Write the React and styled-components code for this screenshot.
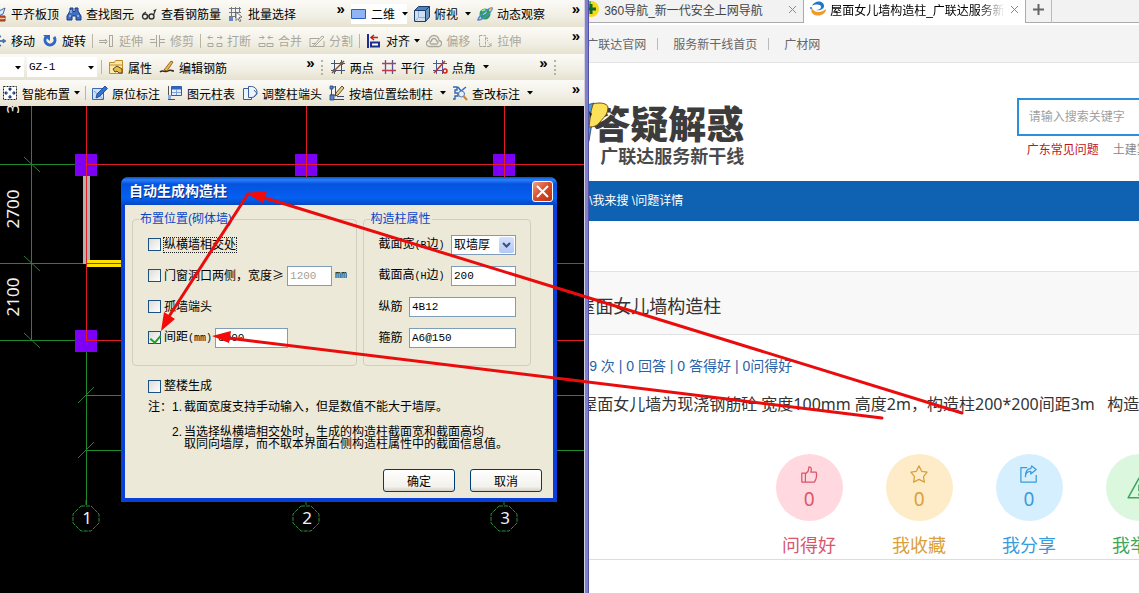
import React from 'react'
import styled, { createGlobalStyle, css } from 'styled-components'

const GlobalStyle = createGlobalStyle`
  * {
    box-sizing: border-box;
  }
  body {
    margin: 0;
    background: #fff;
    font-family: "Liberation Sans", "Noto Sans CJK SC", sans-serif;
    font-size: 12px;
  }
  button, input, select {
    font-family: inherit;
    font-size: inherit;
  }
`

const grey = '#aaa89c'

const icons = {
  slab: <><path d="M6 6l8-4-2 6-7 3z" fill="#dde8f7" stroke="#3c68b0" /><path d="M3 10h11v5H3z" fill="#d2562a" stroke="#8f3210" /><path d="M3 12.500h11M8 10v5" stroke="#f3c8a8" /></>,
  find: <><path d="M4 2h3v3l1 1 1-1V2h3v3l3 5v4h-5v-4H6v4H1v-4l3-5z" fill="#3f6fc0" stroke="#1c3c86" /><path d="M3 10h2M11 10h2M5 4v3" stroke="#cfe0ff" /></>,
  glasses: <><circle cx="4" cy="10.500" r="2.500" fill="none" stroke="#333" strokeWidth="1.400" /><circle cx="10.500" cy="10.500" r="2.500" fill="none" stroke="#333" strokeWidth="1.400" /><path d="M6.500 10h2M12.500 9l2-5-2 1M2 8l3-2" fill="none" stroke="#333" strokeWidth="1.200" /></>,
  batch: <><path d="M1 2.500h12M1 6.500h12M1 10.500h7M3.500 1v12M7.500 1v11M11.500 1v6" stroke="#6f7684" /><path d="M1 11h4v4H1z" fill="#5f86cf" /><path d="M8 6l6 5-3 .5 2 3.500-1.500.5-1.500-3-2 2z" fill="#fff" stroke="#555" strokeWidth=".8" /></>,
  plane: <path d="M.5 3.500h14v9H.5z" fill="#8fb4f5" stroke="#2f5dc0" />,
  cube: <><path d="M.5 4.500l4-4h11l-4 4z" fill="#4a82c4" stroke="#1d3d66" /><path d="M.5 4.500h11v11H.5z" fill="#cfe0f2" stroke="#1d3d66" /><path d="M11.500 4.500l4-4V11l-4 4.500z" fill="#6a94c4" stroke="#1d3d66" /><path d="M4.500 5v6.500H11M4.500 11.500l-4 4" fill="none" stroke="#8fb0d4" /></>,
  orbit: <><circle cx="8" cy="8" r="5.500" fill="#2ba04a" /><path d="M5 5c2-2 4-1 4 1s-3 1-3 3" fill="none" stroke="#a8e8a0" strokeWidth="1.500" /><path d="M1 14c0-3 10-12 14-12 1 3-9 12-14 12z" fill="none" stroke="#4f86d8" strokeWidth="1.500" /><path d="M12 2h3v3" fill="#e8a020" /></>,
  move: <path d="M8 1l2 3H8.500v3.500H12V6l3 2-3 2V8.500H8.500V12H10l-2 3-2-3h1.500V8.500H4V10L1 8l3-2v1.500h3.500V4H6z" fill="#4b79b6" stroke="#2c5690" strokeWidth=".6" />,
  rotate: <><path d="M4 4a5 5 0 1 0 8 0" fill="none" stroke="#2f66c8" strokeWidth="3" /><path d="M1 2h7v6z" fill="#2f66c8" /></>,
  extend: <path d="M0 7.500h8M0 9.500h8M10.500 2v12M13.500 2v12M10 2.500h4M10 13.500h4M6 6l2 2.500L6 11" fill="none" stroke={grey} />,
  trim: <path d="M0 6.500h5M0 9.500h6M10 6.500h5M10 9.500h5M6.500 2v12M9.500 2v12" fill="none" stroke={grey} />,
  snap: <path d="M1 4.500h5M10 4.500h5M3 2.500L1 4.500l2 2M13 2.500l2 2-2 2M1 10.500h5v3H1zM10 10.500h5v3h-5z" fill="none" stroke={grey} />,
  merge: <path d="M1 4.500h5M10 4.500h5M4 2.500l2 2-2 2M12 2.500l-2 2 2 2M1 10.500h6v3H1zM9 10.500h6v3H9z" fill="none" stroke={grey} />,
  split: <path d="M1 5.500h9M1 13.500h14M1 5v9M15 8v6M4 13l9-10 2 1-9 9M3 10.500h4" fill="none" stroke={grey} />,
  align: <><path d="M2 1v14" stroke="#1c2f8c" strokeWidth="2" /><path d="M5 9.500h8v4H5z" fill="#fff" stroke="#1c2f8c" strokeWidth="2" /><path d="M5 4.500h7M8 2L5 4.500 8 7" fill="none" stroke="#c22020" strokeWidth="1.500" /></>,
  offset: <path d="M4 13.500a3 3 0 0 1-1-6 5 5 0 0 1 10 0 3 3 0 0 1-1 6zM5.500 11a1.500 1.500 0 0 1 0-3 2.500 2.500 0 0 1 5 0 1.500 1.500 0 0 1 0 3z" fill="none" stroke={grey} strokeWidth="1.300" />,
  stretch: <path d="M2.500 2.500h6v11h-6zM8.500 5h2v3M6 13.500h8l-3-4M14 10v4" fill="none" stroke={grey} strokeDasharray="3 1" />,
  props: <><path d="M1.500 3.500h5l1-2h7v13h-13z" fill="#ffe9a8" stroke="#c58a28" /><path d="M2 6h12" stroke="#c58a28" /><path d="M5 10l4-3 5 3v4h-3l-2-2-2 1z" fill="#e8c040" stroke="#54422a" /></>,
  editBar: <><path d="M1 13c3-3 5 1 8-1s3 0 6 0" fill="none" stroke="#3a2a18" strokeWidth="1.500" /><path d="M5 11L12 2l2 1-6 9z" fill="#f0b848" stroke="#7c4c18" strokeWidth=".8" /></>,
  twoPoint: <><path d="M4.500 1v14M11.500 1v14M1 4.500h14M1 11.500h14" stroke="#43536f" /><path d="M2 14L14 2" stroke="#8f4a3a" strokeWidth="1.500" /><path d="M3 10h3v3H3zM10 3h3v3h-3z" fill="#6e5a50" /></>,
  parallel: <><path d="M4.500 1v14M11.500 1v14" stroke="#4a5a9c" strokeWidth="1.300" /><path d="M1 4.500h14M1 11.500h14" stroke="#c03a4c" strokeWidth="1.300" /></>,
  corner: <><path d="M4.500 1v14M10.500 1v14M1 4.500h14M1 11.500h10" stroke="#4a5a9c" /><path d="M2 14L13 2" stroke="#c03030" strokeWidth="1.500" /><circle cx="13" cy="12" r="2" fill="none" stroke="#d02020" strokeWidth="1.500" /></>,
  smart: <><path d="M1.500 1.500h13v13h-13z" fill="#fff" stroke="#222" strokeDasharray="2 1" /><path d="M8 3v3M8 10v3M3 8h3M10 8h3M6.500 4.500L8 3l1.500 1.500M6.500 11.500L8 13l1.500-1.500M4.500 6.500L3 8l1.500 1.500M11.500 6.500L13 8l-1.500 1.500" fill="none" stroke="#1c3c78" strokeWidth="1.200" /></>,
  note: <><path d="M.5 3.500h11v11H.5z" fill="#cfe0f7" stroke="#3a6ab0" /><path d="M2 6l9 8" stroke="#7aa0dc" /><path d="M4 13l1-4 8-8 2.500 2.500-8 8z" fill="#2f72d0" stroke="#153f86" strokeWidth=".8" /></>,
  table: <><path d="M1.500 1v14M1 14.500h7" stroke="#555" /><path d="M4.500 1.500h10v9h-10z" fill="#e3eeff" stroke="#2f5da8" /><path d="M5 2h9v2.500H5z" fill="#2f66c0" /><path d="M5 7.500h9M9.500 4v6" stroke="#7aa0dc" /><path d="M1 10h3v4H1z" fill="#88aee6" /></>,
  end: <path d="M6 3.500H1.500v11h8V12M6.500 3v-1.500h3a5 5 0 0 1 0 11h-3zM12 5l3 3.500-3 3" fill="#eef4ff" stroke="#3b5f98" />,
  wall: <><path d="M2.500 1v13M6.500 1v9M2 14.500h13M8 11.500h7M1 2h6M1 10h6" stroke="#3b4a78" /><path d="M1 1h3v3H1zM1 10h4v5H1z" fill="#5a86d0" stroke="#24427c" strokeWidth=".8" /><path d="M6 11l1-3 6-7 2 2-6 7z" fill="#f0d088" stroke="#4a3a20" strokeWidth=".9" /></>,
  check: <><path d="M1 2h4v3H3v3h3v3H3v3H1M6 2l3 4 5-4" fill="none" stroke="#2f68b8" strokeWidth="1.400" /><circle cx="9.500" cy="9" r="3" fill="#dff0ff" stroke="#50789c" /><path d="M11.500 11l3.500 4" stroke="#c88838" strokeWidth="2" /></>,
}

const Icon = ({ name }) => (
  <IconSvg viewBox="0 0 16 16" aria-hidden="true">{icons[name]}</IconSvg>
)

const Arrow = () => (
  <ArrowSvg viewBox="0 0 6 4" aria-hidden="true"><path d="M0 0h6L3 3.500z" /></ArrowSvg>
)

const ToolItem = ({ icon, label, menu, wide, disabled, active }) => (
  <Tool type="button" disabled={disabled} $active={active}>
    <Icon name={icon} />
    {label}
    {menu && <ArrowSlot $wide={wide}><Arrow /></ArrowSlot>}
  </Tool>
)

const actions = [
  { label: '问得好', color: '#d9566b', back: '#ffd9df', count: 0, icon: <path d="M2 9h4v10H2zM6 10l3-3 1-5c3 0 3 3 2 6h6c1 4 0 8-2 11H6" /> },
  { label: '我收藏', color: '#d9a03c', back: '#feecc8', count: 0, icon: <path d="M10 1l3 6 6 1-4 5 1 6-6-3-6 3 1-6-4-5 6-1z" /> },
  { label: '我分享', color: '#3a9bdc', back: '#d5efff', count: 0, icon: <path d="M8 3H1v16h17v-8M6 13c0-5 3-6 6-6v3l6-5-5-4-1 3C8 4 6 8 6 13z" /> },
  { label: '我举报', color: '#3fa65c', back: '#dbf8df', icon: <path d="M10 1l10 18H0zM10 7v6M10 15v2" /> },
]

const columnsX = [86, 306, 504]

const Drawing = () => (
  <DrawingSvg role="img" aria-label="轴网">
    <g stroke="#1d8a2c" shapeRendering="crispEdges">
      <path d="M31.500 0V235M0 58.500H86M0 157.500H86M0 234.500H86M86.500 234V399" fill="none" />
      <line x1="86" x2="100%" y1="289.500" y2="289.500" />
      <line x1="86" x2="100%" y1="344.500" y2="344.500" />
    </g>
    <path d="M24 51l16 15M24 150l16 15M24 227l16 15M78 297l16-16M78 352l16-16" stroke="#2f7a3a" fill="none" />
    <path d="M83 70h7v88h-7z" fill="#b4b0ae" />
    <path d="M86 154h40v7H86z" fill="#ffe000" />
    {columnsX.map((x) => <rect key={x} x={x - 11} y="48" width="22" height="22" fill="#7d00f5" />)}
    <rect x="75" y="224" width="22" height="22" fill="#7d00f5" />
    <g stroke="#e01c24" shapeRendering="crispEdges">
      {columnsX.map((x) => <line key={x} x1={x + 0.5} x2={x + 0.5} y1="0" y2="234" />)}
      {[58.5, 157.5, 234.5].map((y) => <line key={y} x1="86" x2="100%" y1={y} y2={y} />)}
    </g>
    <g fill="#f0f0f0" fontSize="17" textAnchor="middle" fontFamily="Noto Sans, sans-serif">
      <text transform="translate(19 3) rotate(-90)">3</text>
      <text transform="translate(19 103) rotate(-90)">2700</text>
      <text transform="translate(19 191) rotate(-90)">2100</text>
      {columnsX.map((x, i) => (
        <g key={x}>
          <path d={`M${x} 394V399`} stroke="#1d8a2c" />
          <path d={`M${x - 5} 400h10l8 8v9l-8 8h-10l-8-8v-9z`} fill="none" stroke="#2f8a3a" strokeDasharray="4 1" />
          <text x={x + 1} y="418">{i + 1}</text>
        </g>
      ))}
    </g>
  </DrawingSvg>
)

const App = () => {
  return (
    <>
      <GlobalStyle />
      <Screen>
        <CadPane>
          <ToolRow>
            <Bar $grow={12} $cut>
              <ToolItem icon="slab" label="平齐板顶" />
              <ToolItem icon="find" label="查找图元" />
              <ToolItem icon="glasses" label="查看钢筋量" />
              <ToolItem icon="batch" label="批量选择" />
              <More type="button" aria-label="更多">»</More>
            </Bar>
            <Bar $grow={8}>
              <ToolItem icon="plane" label="二维" menu wide active />
              <ToolItem icon="cube" label="俯视" menu wide />
              <ToolItem icon="orbit" label="动态观察" />
              <More type="button" aria-label="更多">»</More>
            </Bar>
          </ToolRow>
          <ToolRow>
            <Bar $grow={1} $cut>
              <ToolItem icon="move" label="移动" />
              <ToolItem icon="rotate" label="旋转" />
              <Separator />
              <ToolItem icon="extend" label="延伸" disabled />
              <ToolItem icon="trim" label="修剪" disabled />
              <Separator />
              <ToolItem icon="snap" label="打断" disabled />
              <ToolItem icon="merge" label="合并" disabled />
              <ToolItem icon="split" label="分割" disabled />
              <Separator />
              <ToolItem icon="align" label="对齐" menu />
              <ToolItem icon="offset" label="偏移" disabled />
              <ToolItem icon="stretch" label="拉伸" disabled />
              <More type="button" aria-label="更多">»</More>
            </Bar>
          </ToolRow>
          <ToolRow>
            <Bar $grow={11}>
              <ComboWrap $width={24}>
                <Combo aria-label="楼层" defaultValue=""><option value="" /></Combo>
                <Arrow />
              </ComboWrap>
              <ComboWrap $width={70}>
                <Combo aria-label="构件"><option>GZ-1</option></Combo>
                <Arrow />
              </ComboWrap>
              <Separator />
              <ToolItem icon="props" label="属性" />
              <ToolItem icon="editBar" label="编辑钢筋" />
              <More type="button" aria-label="更多">»</More>
            </Bar>
            <Bar $grow={8}>
              <Grip />
              <ToolItem icon="twoPoint" label="两点" />
              <ToolItem icon="parallel" label="平行" />
              <ToolItem icon="corner" label="点角" menu wide />
              <More type="button" aria-label="更多">»</More>
            </Bar>
            <Bar $grow={1}>
              <Grip />
            </Bar>
          </ToolRow>
          <ToolRow>
            <Bar $grow={1}>
              <ToolItem icon="smart" label="智能布置" menu />
              <Separator />
              <ToolItem icon="note" label="原位标注" />
              <ToolItem icon="table" label="图元柱表" />
              <ToolItem icon="end" label="调整柱端头" />
              <ToolItem icon="wall" label="按墙位置绘制柱" menu wide />
              <ToolItem icon="check" label="查改标注" menu wide />
              <More type="button" aria-label="更多">»</More>
            </Bar>
          </ToolRow>

          <Canvas>
            <Drawing />
            <Dialog role="dialog" aria-labelledby="dialog-title">
              <TitleBar>
                <DialogTitle id="dialog-title">自动生成构造柱</DialogTitle>
                <Close type="button" aria-label="关闭">
                  <svg width="13" height="13" viewBox="0 0 13 13"><path d="M1 1l11 11M12 1L1 12" stroke="#fff" strokeWidth="2" /></svg>
                </Close>
              </TitleBar>
              <DialogBody>
                <Groups>
                  <Group>
                    <Legend>布置位置(砌体墙)</Legend>
                    <Field>
                      <Check id="cross" />
                      <FocusLabel htmlFor="cross">纵横墙相交处</FocusLabel>
                    </Field>
                    <Field>
                      <Check id="opening" />
                      <label htmlFor="opening">门窗洞口两侧，宽度<Sign>≥</Sign></label>
                      <TextBox $width={45} aria-label="宽度" defaultValue="1200" disabled />
                      <Mono>mm</Mono>
                    </Field>
                    <Field>
                      <Check id="single" />
                      <label htmlFor="single">孤墙端头</label>
                    </Field>
                    <Field>
                      <Check id="spacing" defaultChecked />
                      <label htmlFor="spacing">间距<Mono>(mm)</Mono></label>
                      <TextBox $width={73} aria-label="间距" defaultValue="3000" />
                    </Field>
                  </Group>
                  <Group>
                    <Legend>构造柱属性</Legend>
                    <Field $spread>
                      <label htmlFor="width">截面宽<Mono>(B</Mono>边<Mono>)</Mono></label>
                      <SelectWrap>
                        <Select id="width"><option>取墙厚</option></Select>
                        <SelectButton aria-hidden="true">
                          <svg width="9" height="6" viewBox="0 0 9 6"><path d="M1 1l3.500 3.500L8 1" fill="none" stroke="#3c5078" strokeWidth="2" /></svg>
                        </SelectButton>
                      </SelectWrap>
                    </Field>
                    <Field $spread>
                      <label htmlFor="height">截面高<Mono>(H</Mono>边<Mono>)</Mono></label>
                      <TextBox $width={65} id="height" defaultValue="200" />
                    </Field>
                    <Field $spread>
                      <label htmlFor="main-bar">纵筋</label>
                      <TextBox $width={107} id="main-bar" defaultValue="4B12" />
                    </Field>
                    <Field $spread>
                      <label htmlFor="stirrup">箍筋</label>
                      <TextBox $width={107} id="stirrup" defaultValue="A6@150" />
                    </Field>
                  </Group>
                </Groups>
                <WholeField>
                  <Check id="whole" />
                  <label htmlFor="whole">整楼生成</label>
                </WholeField>
                <Notes>
                  <span>注：</span>
                  <span>1.</span>
                  <span>截面宽度支持手动输入，但是数值不能大于墙厚。</span>
                  <span />
                  <span>2.</span>
                  <span>当选择纵横墙相交处时，生成的构造柱截面宽和截面高均<br />取同向墙厚，而不取本界面右侧构造柱属性中的截面信息值。</span>
                </Notes>
                <Buttons>
                  <Button type="button">确定</Button>
                  <Button type="button">取消</Button>
                </Buttons>
              </DialogBody>
            </Dialog>
          </Canvas>
        </CadPane>

        <Divider />

        <WebPane>
          <Tabs>
            <Tab>
              <TabIcon viewBox="0 0 18 18">
                <circle cx="8" cy="9" r="8" fill="#f4d91c" />
                <path d="M8 1a8 8 0 0 0-7 12L8 9z" fill="#5cb82c" />
                <path d="M8 4v10M3 9h10" stroke="#12691e" strokeWidth="3" />
              </TabIcon>
              <TabText>360导航_新一代安全上网导航</TabText>
              <TabClose type="button" aria-label="关闭标签"><svg width="9" height="9" viewBox="0 0 9 9"><path d="M1 1l7 7M8 1L1 8" stroke="#888" /></svg></TabClose>
            </Tab>
            <Tab $active>
              <TabIcon viewBox="0 0 18 18">
                <path d="M3 6C5 0 15 0 15 6c0 3-4 5-8 4 3 0 5-1 5-3 0-3-6-3-9-1z" fill="#1d78c8" />
                <path d="M17 9c0 6-9 9-14 4-1-2-1-4 0-5 1 4 8 6 14 1z" fill="#f09a28" />
                <circle cx="2" cy="8" r="1" fill="#1d78c8" />
              </TabIcon>
              <TabText $fade>屋面女儿墙构造柱_广联达服务新</TabText>
              <TabClose type="button" aria-label="关闭标签"><svg width="9" height="9" viewBox="0 0 9 9"><path d="M1 1l7 7M8 1L1 8" stroke="#888" /></svg></TabClose>
            </Tab>
            <NewTab type="button" aria-label="新标签"><svg width="11" height="11" viewBox="0 0 11 11"><path d="M5.500 0v11M0 5.500h11" stroke="#666" strokeWidth="2" /></svg></NewTab>
          </Tabs>
          <SiteNav>
            <NavLink href="#">广联达官网</NavLink>
            <NavLink href="#">服务新干线首页</NavLink>
            <NavLink href="#">广材网</NavLink>
          </SiteNav>
          <SiteHeader>
            <Brand>
              <Bird viewBox="0 0 22 44" aria-hidden="true">
                <path d="M0 3l7-2-2 20-3 18-2 4z" fill="#3aa0e8" stroke="#245" strokeWidth=".8" />
                <path d="M6 2c6-2 14-1 15 3 0 8-5 11-8 15-3 4-6 5-11 5 1-6 1-14 4-23z" fill="#fbe05a" stroke="#6b4e18" />
                <path d="M2 9l3 3-2 4" fill="#222" />
              </Bird>
              <BrandName>答疑解惑</BrandName>
              <BrandSub>广联达服务新干线</BrandSub>
            </Brand>
            <Search>
              <SearchBox type="search" aria-label="搜索" placeholder="请输入搜索关键字" />
              <HotLinks>
                <HotLink href="#" $hot>广东常见问题</HotLink>
                <HotLink href="#">土建算量</HotLink>
              </HotLinks>
            </Search>
          </SiteHeader>
          <Crumbs>\我来搜 \问题详情</Crumbs>
          <Question>屋面女儿墙构造柱</Question>
          <Stats>9 次 | 0 回答 | 0 答得好 | 0问得好</Stats>
          <Detail>屋面女儿墙为现浇钢筋砼 宽度100mm 高度2m，构造柱200*200间距3m&nbsp;&nbsp; 构造柱</Detail>
          <Actions>
            {actions.map((a) => (
              <Action key={a.label} type="button" $color={a.color}>
                <Circle $back={a.back}>
                  <ActionIcon viewBox="-1 0 22 20" $big={a.count === undefined}>{a.icon}</ActionIcon>
                  {a.count}
                </Circle>
                {a.label}
              </Action>
            ))}
          </Actions>
        </WebPane>

        <Marks aria-hidden="true">
          <g stroke="#ea0c0c" strokeWidth="3" strokeLinecap="round">
            <path d="M962 413L262 197M248 194L168 318M882 418L228 338" />
          </g>
          <path d="M246 193l21-2-4 12zM161 331l3-19 11 7zM212 336l19-5-2 12z" fill="#f50a0a" />
        </Marks>
      </Screen>
    </>
  )
}

const Screen = styled.div`
  position: relative;
  display: grid;
  grid-template-columns: minmax(0, 17fr) 5px minmax(0, 16fr);
  min-height: 100vh;
  overflow: hidden;
`;

const CadPane = styled.div`
  display: flex;
  flex-direction: column;
  background: #ece9d8;
  overflow: hidden;
`;

const ToolRow = styled.div`
  display: flex;
  height: 27px;

  &:nth-child(n + 3) {
    height: 26px;
  }
`;

const Bar = styled.div`
  display: flex;
  flex: ${(p) => p.$grow} 1 0;
  min-width: 0;
  align-items: center;
  gap: 7px;
  padding: 0 2px;
  background: linear-gradient(#fbfaf6, #f1efe4 60%, #e6e2d0);
  overflow: hidden;

  ${(p) => p.$cut && css`
    padding-left: 0;

    > :first-child {
      margin-left: -9px;
    }
  `}
`;

const Tool = styled.button`
  display: flex;
  flex: none;
  align-items: center;
  gap: 4px;
  height: 20px;
  padding: 0;
  border: 0;
  background: ${(p) => (p.$active ? '#fff' : 'none')};
  color: #000;
  white-space: nowrap;

  &:disabled {
    color: #aaa89c;
  }
`;

const IconSvg = styled.svg`
  flex: none;
  width: 16px;
  height: 16px;
`;

const ArrowSvg = styled.svg`
  width: 6px;
  height: 4px;
  margin-right: -1px;
`;

const ArrowSlot = styled.span`
  display: flex;
  padding-left: ${(p) => (p.$wide ? '3px' : '0')};
`;

const Separator = styled.span`
  flex: none;
  width: 1px;
  height: 14px;
  margin: 0 -1px;
  background: #b9b6a6;
`;

const Grip = styled.span`
  flex: none;
  height: 15px;
  border-left: 2px dotted #b5b2a2;
`;

const More = styled.button`
  align-self: flex-start;
  height: 18px;
  margin-left: auto;
  padding: 0 2px;
  border: 0;
  background: none;
  font-size: 15px;
  font-weight: bold;
  line-height: 18px;
`;

const ComboWrap = styled.span`
  position: relative;
  flex: none;
  width: ${(p) => p.$width}px;
  margin: 0 -2px;

  svg {
    position: absolute;
    right: 4px;
    top: 9px;
  }
`;

const Combo = styled.select`
  display: block;
  width: 100%;
  height: 20px;
  padding: 0 2px;
  border: 0;
  border-radius: 0;
  appearance: none;
  background: #fff;
  color: #000;
  font-family: "Liberation Mono", monospace;
  font-size: 11px;
`;

const Canvas = styled.main`
  position: relative;
  flex: 1;
  min-height: 460px;
  background: #000;
`;

const DrawingSvg = styled.svg`
  display: block;
  width: 100%;
  height: 460px;
`;

const Dialog = styled.section`
  position: absolute;
  left: 121px;
  top: 71px;
  width: 436px;
  border-radius: 7px 7px 0 0;
  background: #0a3fd6;
  overflow: hidden;
`;

const TitleBar = styled.header`
  display: flex;
  align-items: center;
  justify-content: space-between;
  height: 28px;
  padding: 0 4px 0 8px;
  background: linear-gradient(#0a50c8, #2a80f8 10%, #0553e0 25%, #0560f2 75%, #0348c4);
`;

const DialogTitle = styled.h2`
  margin: 0;
  color: #fff;
  font-size: 14px;
  line-height: 20px;
  text-shadow: 1px 1px #0a2a80;
`;

const Close = styled.button`
  display: flex;
  align-items: center;
  justify-content: center;
  width: 21px;
  height: 21px;
  padding: 0;
  border: 1px solid #fff;
  border-radius: 3px;
  background: linear-gradient(135deg, #f0a088, #d84a24 50%, #b83410);
`;

const DialogBody = styled.div`
  margin: 0 4px 4px;
  padding: 7px 11px 6px 7px;
  background: #ece9d8;
`;

const Groups = styled.div`
  display: grid;
  grid-template-columns: 4fr 3fr;
  gap: 6px;
  margin-right: 11px;
`;

const Group = styled.fieldset`
  min-width: 0;
  margin: 0;
  padding: 3px 14px 12px 15px;
  border: 1px solid #d0cebf;
  border-radius: 4px;
`;

const Legend = styled.legend`
  margin-left: -9px;
  padding: 0 1px;
  color: #0a46c8;
  line-height: 14px;
`;

const Field = styled.div`
  display: flex;
  align-items: center;
  justify-content: ${(p) => (p.$spread ? 'space-between' : 'flex-start')};
  gap: 3px;
  height: 31px;
  line-height: 16px;
  white-space: nowrap;
`;

const WholeField = styled(Field)`
  height: 16px;
  margin: 12px 0 7px 16px;
`;

const Check = styled.input.attrs({ type: 'checkbox' })`
  position: relative;
  flex: none;
  width: 13px;
  height: 13px;
  margin: 0;
  border: 1px solid #1c5180;
  appearance: none;
  background: linear-gradient(135deg, #dcdcd7, #fff);

  &:checked::after {
    content: '';
    position: absolute;
    left: 3px;
    top: 1px;
    width: 5px;
    height: 8px;
    border: solid #21a121;
    border-width: 0 2px 2px 0;
    transform: rotate(40deg);
  }
`;

const FocusLabel = styled.label`
  outline: 1px dotted #222;
  line-height: 14px;
`;

const Sign = styled.span`
  font-family: "Noto Sans CJK SC", sans-serif;
`;

const Mono = styled.span`
  font-family: "Liberation Mono", monospace;
  font-size: 10px;
`;

const TextBox = styled.input`
  width: ${(p) => p.$width}px;
  height: 20px;
  padding: 0 2px;
  border: 1px solid #7f9db9;
  background: #fff;
  color: #000;
  font-family: "Liberation Mono", monospace;
  font-size: 11px;

  &:disabled {
    color: #a5a294;
  }
`;

const SelectWrap = styled.span`
  position: relative;
  width: 65px;
`;

const Select = styled.select`
  display: block;
  width: 100%;
  height: 20px;
  padding: 0 2px;
  border: 1px solid #7f9db9;
  border-radius: 0;
  appearance: none;
  background: #fff;
  color: #000;
`;

const SelectButton = styled.span`
  position: absolute;
  right: 2px;
  top: 2px;
  display: flex;
  align-items: center;
  justify-content: center;
  width: 15px;
  height: 16px;
  border-radius: 2px;
  background: linear-gradient(#d6e2fd, #b4c8f6);
  pointer-events: none;
`;

const Notes = styled.div`
  display: grid;
  grid-template-columns: 24px 12px 1fr;
  row-gap: 13px;
  margin-left: 16px;
  line-height: 12px;
  white-space: nowrap;
`;

const Buttons = styled.div`
  display: flex;
  justify-content: flex-end;
  gap: 15px;
  margin-top: 19px;
`;

const Button = styled.button`
  width: 72px;
  height: 23px;
  padding: 0;
  border: 1px solid #003c74;
  border-radius: 3px;
  background: linear-gradient(#fff, #f2f1ec 80%, #d6d0c5);
  color: #000;
`;

const Divider = styled.div`
  border-left: 1px solid #d4d0e4;
  border-right: 1px solid #5252a8;
  background: #8080c6;
`;

const WebPane = styled.div`
  background: #fff;
  overflow: hidden;
`;

const Tabs = styled.div`
  display: flex;
  height: 25px;
  border-bottom: 2px solid #fff;
  background: #f2f2f2;
  box-shadow: inset 0 -1px #aaa;
`;

const Tab = styled.div`
  display: flex;
  flex: 0 1 ${(p) => (p.$active ? '222px' : '215px')};
  align-items: center;
  gap: 3px;
  min-width: 0;
  padding: 0 4px 5px ${(p) => (p.$active ? '5px' : '0')};
  border-right: 1px solid #aaa;
  background: ${(p) => (p.$active ? '#fff' : 'none')};
  color: ${(p) => (p.$active ? '#000' : '#444')};

  > :first-child {
    margin-left: ${(p) => (p.$active ? '0' : '-6px')};
  }
`;

const TabIcon = styled.svg`
  flex: none;
  width: 18px;
  height: 18px;
`;

const TabText = styled.span`
  flex: 1;
  overflow: hidden;
  white-space: nowrap;
  mask-image: ${(p) => (p.$fade ? 'linear-gradient(90deg, #000 85%, transparent)' : 'none')};
`;

const TabClose = styled.button`
  display: flex;
  padding: 3px 2px;
  border: 0;
  background: none;
`;

const NewTab = styled.button`
  display: flex;
  align-items: center;
  justify-content: center;
  width: 26px;
  padding: 0 0 4px;
  border: 0;
  border-right: 1px solid #bbb;
  background: none;
`;

const SiteNav = styled.nav`
  display: flex;
  align-items: center;
  height: 38px;
  margin-left: -3px;
  border-bottom: 1px solid #e4e4e4;
  background: #f4f4f4;
`;

const NavLink = styled.a`
  display: flex;
  align-items: center;
  color: #666;
  text-decoration: none;
  white-space: nowrap;

  &:not(:last-child)::after {
    content: '';
    height: 12px;
    margin: 0 15px 0 11px;
    border-left: 1px solid #bbb;
  }
`;

const SiteHeader = styled.header`
  display: grid;
  grid-template-columns: 7fr 2fr;
  align-items: start;
  height: 118px;
  padding-top: 35px;
`;

const Brand = styled.div`
  position: relative;
  padding: 5px 0 0 3px;
  color: #3c3c3c;
  font-family: "Noto Sans CJK SC", sans-serif;
  white-space: nowrap;
`;

const Bird = styled.svg`
  position: absolute;
  left: -2px;
  top: 4px;
  width: 22px;
  height: 44px;
`;

const BrandName = styled.h1`
  margin: 0;
  font-size: 38px;
  font-weight: 900;
  line-height: 38px;
`;

const BrandSub = styled.p`
  margin: 4px 0 0 8px;
  color: #4a4a4a;
  font-size: 18px;
  font-weight: bold;
  line-height: 20px;
`;

const Search = styled.div`
  min-width: 0;
  overflow: hidden;
`;

const SearchBox = styled.input`
  display: block;
  width: 100%;
  height: 38px;
  padding: 0 0 0 10px;
  border: 2px solid #2b8fdc;
  border-right: 0;
  border-radius: 0;
  outline: 0;
  appearance: none;
  background: #fff;

  &::placeholder {
    color: #a0a0a0;
  }
`;

const HotLinks = styled.div`
  display: flex;
  gap: 14px;
  padding: 5px 0 0 10px;
  line-height: 18px;
  white-space: nowrap;
`;

const HotLink = styled.a`
  color: ${(p) => (p.$hot ? '#c4141c' : '#888')};
  text-decoration: none;
`;

const Crumbs = styled.nav`
  height: 40px;
  background: #0f62b2;
  color: #fff;
  line-height: 40px;
`;

const Question = styled.h2`
  margin: 50px 0 0;
  padding-top: 8px;
  border: solid #e2e2e2;
  border-width: 1px 0;
  background: #f8f8f8;
  color: #333;
  font-size: 18px;
  font-weight: normal;
  line-height: 54px;
  text-indent: -12px;
  white-space: nowrap;
`;

const Stats = styled.p`
  margin: 21px 0 0;
  color: #2a62a8;
  font-size: 14px;
  line-height: 20px;
  white-space: nowrap;
`;

const Detail = styled.p`
  margin: 18px 0 0 -8px;
  color: #333;
  font-family: "Noto Sans", "Noto Sans CJK SC", sans-serif;
  font-size: 16px;
  line-height: 20px;
  white-space: nowrap;
`;

const Actions = styled.div`
  display: flex;
  padding: 40px 0 1px 30%;
  border-bottom: 1px solid #ddd;
`;

const Action = styled.button`
  display: flex;
  flex: 0 0 calc(200% / 7);
  flex-direction: column;
  align-items: center;
  gap: 13px;
  padding: 0;
  border: 0;
  background: none;
  color: ${(p) => p.$color};
  font-size: 18px;
  line-height: 24px;
`;

const Circle = styled.span`
  display: flex;
  flex-direction: column;
  align-items: center;
  justify-content: center;
  gap: 4px;
  width: 67px;
  height: 67px;
  border-radius: 50%;
  background: ${(p) => p.$back};
  font-family: "Noto Sans", sans-serif;
  font-size: 19px;
`;

const ActionIcon = styled.svg`
  width: ${(p) => (p.$big ? '24px' : '20px')};
  height: ${(p) => (p.$big ? '22px' : '18px')};
  fill: none;
  stroke: currentColor;
  stroke-width: 1.4;
  stroke-linejoin: round;
`;

const Marks = styled.svg`
  position: absolute;
  inset: 0;
  width: 100%;
  height: 100%;
  pointer-events: none;
`;

export default App
